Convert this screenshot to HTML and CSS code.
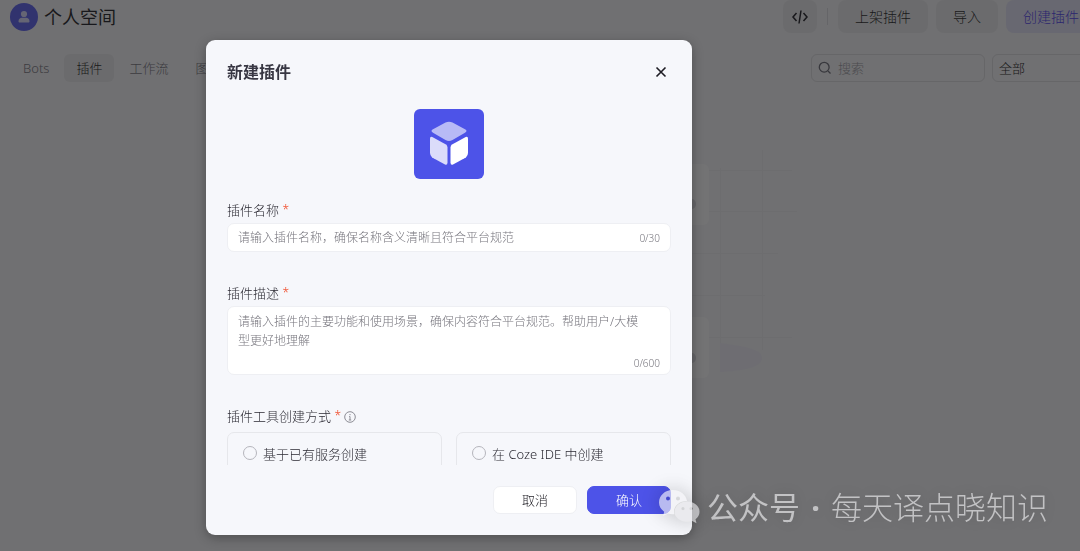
FILE: index.html
```html
<!DOCTYPE html>
<html lang="zh-CN">
<head>
<meta charset="utf-8">
<title>个人空间</title>
<link rel="stylesheet" href="styles.css">
</head>
<body>
<div class="page">
  <header class="topbar">
    <span class="avatar">
      <svg width="12" height="14" viewBox="0 0 12 14"><circle cx="6" cy="4" r="3.1"/><path d="M.5 11.2C.5 9 2 7.8 4 7.8h4c2 0 3.500 1.200 3.500 3.400 0 .8-.5 1.300-1.300 1.300H1.800c-.8 0-1.300-.5-1.300-1.300z"/></svg>
    </span>
    <h1 class="space-name">个人空间</h1>
    <div class="actions">
      <button class="btn btn-icon" aria-label="API">
        <svg width="16" height="14" viewBox="0 0 16 14"><path d="M4.500 3 1 7l3.500 4M11.500 3 15 7l-3.500 4M9 .5 7 13.500"/></svg>
      </button>
      <span class="divider"></span>
      <button class="btn">上架插件</button>
      <button class="btn">导入</button>
      <button class="btn btn-create">创建插件</button>
    </div>
  </header>
  <div class="toolbar">
    <nav class="tabs">
      <a class="tab" href="#">Bots</a>
      <a class="tab active" href="#">插件</a>
      <a class="tab" href="#">工作流</a>
      <a class="tab" href="#">图</a>
    </nav>
    <div class="filters">
      <label class="search">
        <svg width="14" height="14" viewBox="0 0 14 14"><circle cx="6.200" cy="6.200" r="4.900"/><path d="m10 10 2.500 2.500"/></svg>
        <input type="text" placeholder="搜索" aria-label="搜索">
      </label>
      <select class="scope" aria-label="范围"><option>全部</option></select>
    </div>
  </div>
  <svg class="empty-art" width="180" height="240" viewBox="0 0 180 240">
    <g class="grid">
      <path d="M0 30.500h132M0 71.500h137M0 113.500h118M0 155.500h105M0 197.500h132M60.500 28v175M102.500 10v200"/>
    </g>
    <path class="blob" d="M60 203c20 3 42 5 42 15s-22 13-42 14z"/>
    <rect class="card" x="-60" y="24" width="109" height="61" rx="6"/>
    <rect class="card" x="-60" y="177" width="109" height="61" rx="6"/>
    <ellipse class="knob" cx="32" cy="64" rx="4" ry="5"/><ellipse class="knob" cx="32" cy="218" rx="4" ry="5"/>
  </svg>
</div>

<div class="mask">
  <form class="modal" role="dialog" aria-labelledby="modal-title">
    <header class="modal-head">
      <h2 class="modal-title" id="modal-title">新建插件</h2>
      <button class="close" type="button" aria-label="关闭">
        <svg width="12" height="12" viewBox="0 0 12 12"><path d="m1.500 1.500 9 9m0-9-9 9"/></svg>
      </button>
    </header>
    <div class="modal-body">
      <svg class="plugin-icon" width="70" height="70" viewBox="0 0 70 70">
        <rect width="70" height="70" rx="6" fill="#4d53e8"/>
        <path fill="#b8baf6" d="M31.500 13.500Q35 12 38.500 13.500L51 20.300Q54 22 51 23.700L38.500 31Q35 33 31.500 31L19 23.700Q16 22 19 20.300z"/>
        <path fill="#dbdcfa" d="M16 29.500Q16 27 18.300 28L31.500 35.200Q33.500 36.300 33.500 38.500V53.500Q33.500 56.500 31 55.500L19.500 49.300Q16 47.300 16 43.500z"/>
        <path fill="#fff" d="M54 29.500Q54 27 51.700 28L38.500 35.200Q36.500 36.300 36.500 38.500V53.500Q36.500 56.500 39 55.500L50.500 49.300Q54 47.300 54 43.500z"/>
      </svg>
      <div class="field">
        <label class="label" for="name">插件名称 <span class="star">*</span></label>
        <div class="box">
          <input class="control" id="name" type="text" placeholder="请输入插件名称，确保名称含义清晰且符合平台规范">
          <span class="count">0/30</span>
        </div>
      </div>
      <div class="field">
        <label class="label" for="desc">插件描述 <span class="star">*</span></label>
        <div class="box box-area">
          <textarea class="control" id="desc" rows="2" placeholder="请输入插件的主要功能和使用场景，确保内容符合平台规范。帮助用户/大模型更好地理解"></textarea>
          <span class="count">0/600</span>
        </div>
      </div>
      <fieldset class="field">
        <legend class="label">插件工具创建方式 <span class="star">*</span>
          <svg class="info" width="12" height="12" viewBox="0 0 12 12"><circle cx="6" cy="6" r="5.300"/><path d="M6 3v1.200M5.200 5.500H6V9M4.800 9h2.400"/></svg>
        </legend>
        <div class="options">
          <label class="option"><input class="radio" type="radio" name="way">基于已有服务创建</label>
          <label class="option"><input class="radio" type="radio" name="way">在 Coze IDE 中创建</label>
        </div>
      </fieldset>
    </div>
    <footer class="modal-foot">
      <button class="foot-btn" type="button">取消</button>
      <button class="foot-btn primary" type="button">确认</button>
    </footer>
  </form>
</div>

<div class="watermark">
  <svg width="42" height="36" viewBox="0 0 42 36">
    <path fill="#f2f2f4" fill-rule="evenodd" d="M14.500 1C22 1 28 5.500 29 12 21.500 12 16 17 16 22.500c0 1 .1 1.800.4 2.700-2.400.2-4.400 0-6.400-.7L5 27l1.200-4.300C3 20.500 1 17.300 1 13.500 1 6.500 7 1 14.500 1zM10 7.500a2 2 0 1 0 0 4 2 2 0 0 0 0-4zm10 0a2 2 0 1 0 0 4 2 2 0 0 0 0-4z"/>
    <path fill="#e4e4e6" fill-rule="evenodd" d="M29 12.500c7 0 12.500 4.500 12.500 10.200 0 3-1.500 5.600-4 7.500l1 4-4.300-2.300c-1.600.5-3.400.8-5.200.8-7 0-12.500-4.500-12.500-10S22 12.500 29 12.500zM25 18a1.600 1.600 0 1 0 0 3.200 1.600 1.600 0 0 0 0-3.200zm8 0a1.600 1.600 0 1 0 0 3.200 1.600 1.600 0 0 0 0-3.200z"/>
  </svg>
  <span class="mark-kind">公众号</span><span class="mark-dot">·</span><span>每天译点晓知识</span>
</div>
</body>
</html>
```

FILE: styles.css
```css
* { box-sizing: border-box; }

body {
  margin: 0;
  min-height: 100vh;
  overflow: hidden;
  background: #f7f7f9;
  color: #1d1c23;
  font: 300 13px/20px "Noto Sans", "Noto Sans CJK SC", sans-serif;
}

button, input, textarea, select { font: inherit; color: inherit; }
h1, h2 { margin: 0; }

.page { position: relative; min-height: 100vh; overflow: hidden; }

.topbar { display: flex; align-items: center; height: 33px; padding-left: 10px; }
.avatar {
  display: flex; align-items: center; justify-content: center;
  width: 28px; height: 28px; border-radius: 50%;
  background: #5a5ff0; fill: #dcdcff;
}
.space-name { margin-left: 6px; font-size: 18px; font-weight: 400; line-height: 24px; }
.actions { display: flex; align-items: center; gap: 8px; margin: 0 -16px 0 auto; }
.btn {
  height: 33px; padding: 0 17px; border: 0; border-radius: 8px;
  background: #ececee; font-size: 14px; white-space: nowrap;
}
.btn-icon { display: flex; align-items: center; justify-content: center; width: 34px; padding: 0; }
.btn-icon svg { fill: none; stroke: #1d1c23; stroke-width: 1.5; }
.btn-create { background: #e3e3f7; color: #4d40f0; }
.divider { width: 1px; height: 17px; margin: 0 2px; background: #dcdce0; }

.toolbar { display: flex; justify-content: space-between; margin-top: 21px; padding-left: 11px; }
.tabs { display: flex; gap: 3px; }
.tab {
  padding: 4px 12px; border-radius: 6px;
  color: #76757d; text-decoration: none; white-space: nowrap;
}
.tab.active { background: #ebebed; color: #1d1c23; }
.filters { display: flex; gap: 7px; margin-right: -30px; }
.search {
  display: flex; align-items: center; gap: 6px;
  width: 174px; height: 28px; padding: 0 6px;
  border: 1px solid #dedee1; border-radius: 6px;
}
.search svg { flex: none; fill: none; stroke: #6b6b75; stroke-width: 1.3; }
.search input { width: 100%; padding: 0; border: 0; outline: 0; background: none; }
.search input::placeholder { color: #9c9ca3; opacity: 1; }
.scope {
  appearance: none; width: 118px; height: 28px; padding: 0 6px;
  border: 1px solid #dedee1; border-radius: 6px; background: none;
}

.empty-art { position: absolute; left: 660px; top: 140px; }
.grid { fill: none; stroke: #efeff2; }
.blob { fill: #f2f0f9; }
.card { fill: #fff; }
.knob { fill: #dedee2; }

.mask {
  position: fixed; inset: 0;
  display: flex; align-items: flex-start;
  padding: 40px 0 16px 206px;
  background: rgba(22, 22, 24, .6);
}
.modal {
  display: flex; flex-direction: column;
  width: 486px; max-height: 100%;
  padding: 0 21px 21px;
  border-radius: 9px; background: #f6f7fb;
  box-shadow: 0 3px 12px rgba(0, 0, 0, .3);
}
.modal-head { display: flex; align-items: center; justify-content: space-between; flex: none; height: 64px; }
.modal-title { font-size: 16px; font-weight: 700; line-height: 24px; color: #383743; }
.close { display: flex; padding: 4px; border: 0; background: none; }
.close svg { fill: none; stroke: #1d1c23; stroke-width: 1.6; }

.modal-body { flex: 1; min-height: 0; overflow: hidden; padding-top: 5px; }
.plugin-icon { display: block; margin: 0 auto 21px; }
.field { margin: 0 0 31px; padding: 0; border: 0; min-width: 0; }
.label { display: block; margin-bottom: 3px; padding: 0; color: #2b2a33; }
.star { color: #f0401c; font-size: 12px; vertical-align: 1px; line-height: 16px; }
.info { vertical-align: -2px; fill: none; stroke: #8c8c94; stroke-width: 1; }
.box {
  display: flex; align-items: center;
  min-height: 29px; padding: 0 10px;
  border: 1px solid #eeeff3; border-radius: 7px; background: #fff;
}
.box-area { flex-direction: column; align-items: stretch; gap: 3px; padding: 5px 10px 1px; }
.control {
  flex: 1; min-width: 0; padding: 0; border: 0; outline: 0;
  background: none; font-size: 12px; line-height: 19px; resize: none;
}
.box-area .control { display: block; flex: none; padding-right: 16px; overflow: hidden; }
.control::placeholder { color: #77767e; opacity: 1; }
.count { font-size: 10px; color: #77767e; text-align: right; }

.options { display: grid; grid-template-columns: 1fr 1fr; gap: 14px; padding-top: 3px; }
.option {
  display: flex; align-items: flex-start; gap: 6px;
  height: 70px; padding: 11px 15px;
  border: 1px solid #e6e7eb; border-radius: 7px; color: #2b2a33;
}
.radio {
  appearance: none; flex: none; width: 14px; height: 14px; margin: 2px 0;
  border: 1px solid #b5b5bc; border-radius: 50%;
}

.modal-foot { display: flex; justify-content: flex-end; gap: 10px; flex: none; padding-top: 21px; }
.foot-btn {
  width: 84px; height: 28px; padding: 0;
  border: 1px solid #eeeff3; border-radius: 7px; background: #fff;
}
.foot-btn.primary { border-color: #4d53e8; background: #4d53e8; color: #fff; }

.watermark {
  position: fixed; left: 658px; bottom: 22px;
  display: flex; align-items: center;
  color: #c2c2c4; font-size: 31px; line-height: 44px; white-space: nowrap;
  text-shadow: 0 0 14px rgba(0, 0, 0, .15);
}
.watermark svg { position: relative; opacity: .65; filter: drop-shadow(0 0 10px rgba(0, 0, 0, .35)); }
.mark-kind { margin-left: 7px; font-weight: 400; }
.mark-dot { width: 31px; text-align: center; font-weight: 700; }
```
